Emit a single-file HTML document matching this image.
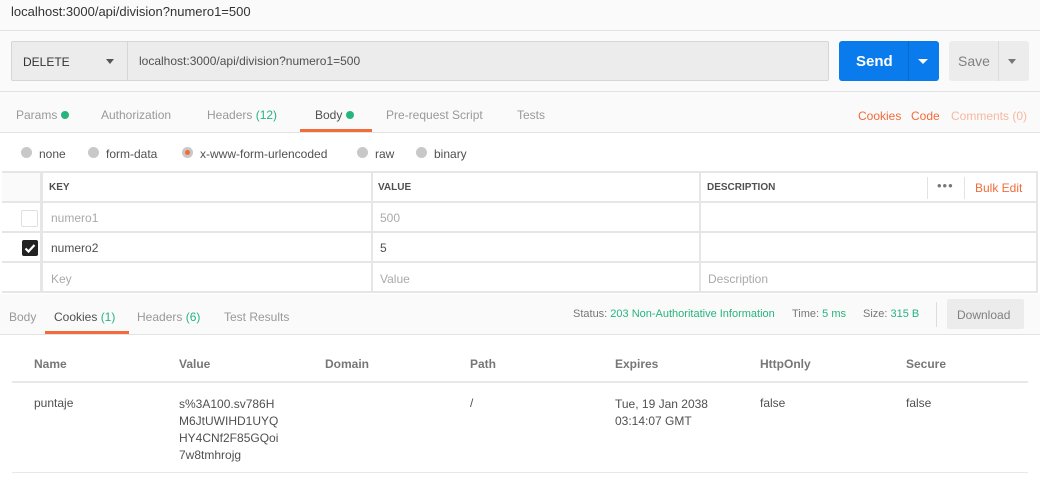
<!DOCTYPE html>
<html><head><style>
*{box-sizing:border-box;margin:0;padding:0}
body{width:1040px;height:494px;background:#fafafa;font-family:"Liberation Sans",sans-serif;font-size:12px;color:#505050;position:relative;overflow:hidden}
.a{position:absolute;white-space:nowrap}
.hl{position:absolute;height:1px;background:#e3e3e3}
.g{color:#26b47f}
.o{color:#f26b3a}
.dot{display:inline-block;width:8px;height:8px;border-radius:50%;background:#26b47f;margin-left:4px;vertical-align:0}
.r{position:absolute;width:11px;height:11px;border-radius:50%;background:#c8c8c8;top:147px}
.th{font-size:10px;font-weight:bold;color:#505050}
.ch{font-size:12px;font-weight:bold;color:#777}
</style></head><body>
<div class="a" style="left:11px;top:4px;font-size:13px;color:#333">localhost:3000/api/division?numero1=500</div>
<div class="hl" style="left:0;top:30px;width:1040px"></div>

<div class="a" style="left:11px;top:41px;width:818px;height:40px;background:#ececec;border:1px solid #d6d6d6;border-radius:2px"></div>
<div class="a" style="left:127px;top:41px;width:1px;height:40px;background:#d6d6d6"></div>
<div class="a" style="left:23px;top:55px;font-size:12px;color:#333">DELETE</div>
<div class="a" style="left:106px;top:59px;border-left:4px solid transparent;border-right:4px solid transparent;border-top:5px solid #555"></div>
<div class="a" style="left:139px;top:54px;font-size:12px;color:#505050">localhost:3000/api/division?numero1=500</div>

<div class="a" style="left:839px;top:41px;width:100px;height:40px;background:#097bed;border-radius:3px"></div>
<div class="a" style="left:908px;top:41px;width:1px;height:40px;background:#0a68c8"></div>
<div class="a" style="left:856px;top:53px;font-size:15px;font-weight:bold;color:#fff">Send</div>
<div class="a" style="left:918px;top:59px;border-left:5px solid transparent;border-right:5px solid transparent;border-top:5px solid #fff"></div>
<div class="a" style="left:949px;top:41px;width:80px;height:40px;background:#ececec;border-radius:3px"></div>
<div class="a" style="left:998px;top:41px;width:1px;height:40px;background:#dcdcdc"></div>
<div class="a" style="left:958px;top:53px;font-size:14px;color:#808080">Save</div>
<div class="a" style="left:1008px;top:59px;border-left:4px solid transparent;border-right:4px solid transparent;border-top:5px solid #777"></div>
<div class="hl" style="left:0;top:91px;width:1040px"></div>

<div class="a" style="left:16px;top:108px;color:#999">Params<span class="dot"></span></div>
<div class="a" style="left:101px;top:108px;color:#999">Authorization</div>
<div class="a" style="left:207px;top:108px;color:#999">Headers <span class="g">(12)</span></div>
<div class="a" style="left:315px;top:108px;color:#505050">Body<span class="dot"></span></div>
<div class="a" style="left:300px;top:129px;width:72px;height:3px;background:#f26b3a"></div>
<div class="a" style="left:386px;top:108px;color:#999">Pre-request Script</div>
<div class="a" style="left:517px;top:108px;color:#999">Tests</div>
<div class="a o" style="left:858px;top:109px">Cookies</div>
<div class="a o" style="left:911px;top:109px">Code</div>
<div class="a" style="left:951px;top:109px;color:#f8b89e">Comments (0)</div>
<div class="hl" style="left:0;top:132px;width:1040px"></div>

<div class="a" style="left:0;top:133px;width:1040px;height:161px;background:#fff"></div>
<div class="r" style="left:21px"></div><div class="a" style="left:39px;top:147px">none</div>
<div class="r" style="left:88px"></div><div class="a" style="left:106px;top:147px">form-data</div>
<div class="r" style="left:182px;background:#c8c8c8"></div><div class="a" style="left:185px;top:150px;width:5px;height:5px;border-radius:50%;background:#f26b3a"></div>
<div class="a" style="left:200px;top:147px">x-www-form-urlencoded</div>
<div class="r" style="left:357px"></div><div class="a" style="left:375px;top:147px">raw</div>
<div class="r" style="left:416px"></div><div class="a" style="left:434px;top:147px">binary</div>

<!-- table -->
<div class="a" style="left:2px;top:171px;width:1036px;height:122px;background:#fff;border-top:2px solid #e6e6e6;border-bottom:2px solid #e6e6e6"></div>
<div class="a" style="left:2px;top:173px;width:39px;height:28px;background:#fafafa"></div>
<div class="a" style="left:40px;top:171px;width:3px;height:122px;background:#e6e6e6"></div>
<div class="a" style="left:371px;top:171px;width:2px;height:122px;background:#e6e6e6"></div>
<div class="a" style="left:699px;top:171px;width:2px;height:122px;background:#e6e6e6"></div>
<div class="a" style="left:1036px;top:171px;width:2px;height:122px;background:#e6e6e6"></div>
<div class="a" style="left:2px;top:201px;width:1036px;height:2px;background:#e6e6e6"></div>
<div class="a" style="left:2px;top:231px;width:1036px;height:2px;background:#e6e6e6"></div>
<div class="a" style="left:2px;top:261px;width:1036px;height:2px;background:#e6e6e6"></div>
<div class="a" style="left:927px;top:177px;width:1px;height:22px;background:#e3e3e3"></div>
<div class="a" style="left:964px;top:177px;width:1px;height:22px;background:#e3e3e3"></div>
<div class="a th" style="left:49px;top:182px">KEY</div>
<div class="a th" style="left:378px;top:182px">VALUE</div>
<div class="a th" style="left:707px;top:182px">DESCRIPTION</div>
<div class="a" style="left:937px;top:178px;color:#777;font-size:13px;letter-spacing:1px">•••</div>
<div class="a o" style="left:975px;top:181px">Bulk Edit</div>
<div class="a" style="left:21px;top:210px;width:17px;height:17px;border:1px solid #e0e0e0;border-radius:2px;background:#fff"></div>
<div class="a" style="left:51px;top:211px;color:#aaa">numero1</div>
<div class="a" style="left:380px;top:211px;color:#aaa">500</div>
<div class="a" style="left:22px;top:240px;width:16px;height:16px;background:#222;border-radius:2px"></div>
<svg class="a" style="left:22px;top:240px" width="16" height="16"><path d="M3.5 8.5l3 3 6-6.5" stroke="#fff" stroke-width="2.2" fill="none"/></svg>
<div class="a" style="left:51px;top:241px;color:#505050">numero2</div>
<div class="a" style="left:380px;top:241px;color:#505050">5</div>
<div class="a" style="left:51px;top:272px;color:#aaa">Key</div>
<div class="a" style="left:380px;top:272px;color:#aaa">Value</div>
<div class="a" style="left:708px;top:272px;color:#aaa">Description</div>

<!-- response -->
<div class="a" style="left:9px;top:310px;color:#999">Body</div>
<div class="a" style="left:54px;top:310px;color:#505050">Cookies <span class="g">(1)</span></div>
<div class="a" style="left:45px;top:331px;width:84px;height:3px;background:#f26b3a"></div>
<div class="a" style="left:137px;top:310px;color:#999">Headers <span class="g">(6)</span></div>
<div class="a" style="left:224px;top:310px;color:#999">Test Results</div>
<div class="a" style="left:573px;top:308px;font-size:11px;color:#777">Status: <span class="g">203 Non-Authoritative Information</span></div>
<div class="a" style="left:792px;top:308px;font-size:11px;color:#777">Time: <span class="g">5 ms</span></div>
<div class="a" style="left:863px;top:308px;font-size:11px;color:#777">Size: <span class="g">315 B</span></div>
<div class="a" style="left:936px;top:302px;width:1px;height:25px;background:#ddd"></div>
<div class="a" style="left:947px;top:299px;width:77px;height:30px;background:#ececec;border-radius:2px"></div>
<div class="a" style="left:957px;top:308px;font-size:12px;color:#808080">Download</div>
<div class="hl" style="left:0;top:334px;width:1040px"></div>
<div class="a" style="left:0;top:335px;width:1040px;height:159px;background:#fff"></div>
<div class="a ch" style="left:34px;top:357px">Name</div>
<div class="a ch" style="left:179px;top:357px">Value</div>
<div class="a ch" style="left:325px;top:357px">Domain</div>
<div class="a ch" style="left:470px;top:357px">Path</div>
<div class="a ch" style="left:615px;top:357px">Expires</div>
<div class="a ch" style="left:760px;top:357px">HttpOnly</div>
<div class="a ch" style="left:906px;top:357px">Secure</div>
<div class="a" style="left:12px;top:381px;width:1016px;height:2px;background:#e8e8e8"></div>
<div class="a" style="left:34px;top:396px">puntaje</div>
<div class="a" style="left:179px;top:396px;line-height:17px">s%3A100.sv786H<br>M6JtUWIHD1UYQ<br>HY4CNf2F85GQoi<br>7w8tmhrojg</div>
<div class="a" style="left:470px;top:396px">/</div>
<div class="a" style="left:615px;top:396px;line-height:17px">Tue, 19 Jan 2038<br>03:14:07 GMT</div>
<div class="a" style="left:760px;top:396px">false</div>
<div class="a" style="left:906px;top:396px">false</div>
<div class="a" style="left:12px;top:472px;width:1016px;height:1px;background:#e8e8e8"></div>
</body></html>
